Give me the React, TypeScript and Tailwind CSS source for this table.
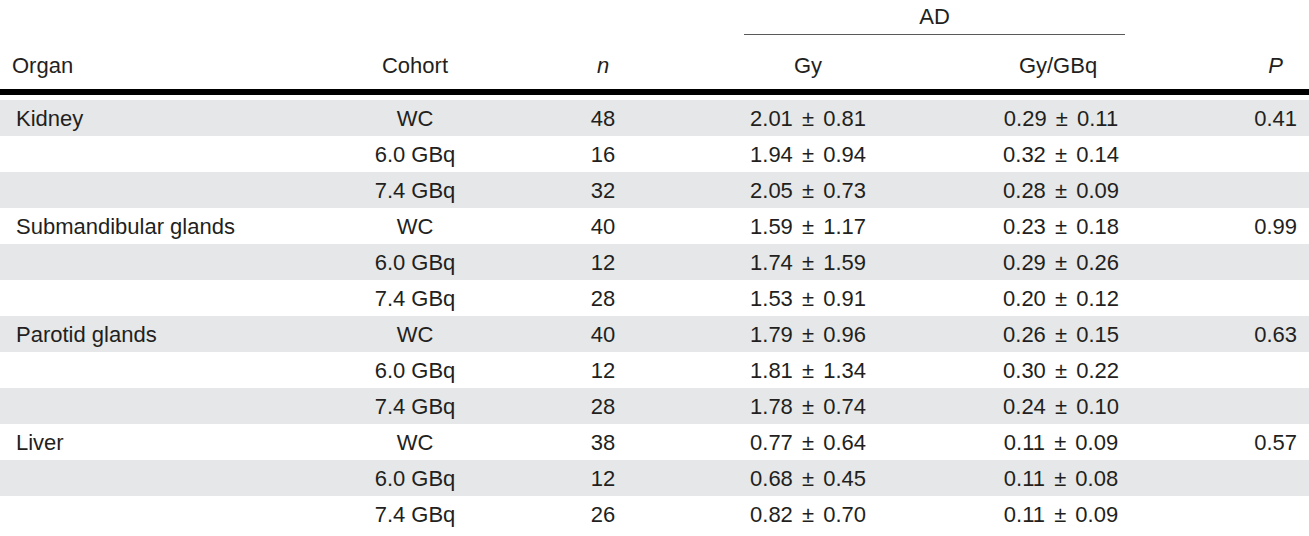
import React from "react";

type Row = { organ?: string; cohort: string; n: string; gy: string; gyg: string; p?: string };

const rows: Row[] = [
  { organ: "Kidney", cohort: "WC", n: "48", gy: "2.01 ± 0.81", gyg: "0.29 ± 0.11", p: "0.41" },
  { cohort: "6.0 GBq", n: "16", gy: "1.94 ± 0.94", gyg: "0.32 ± 0.14" },
  { cohort: "7.4 GBq", n: "32", gy: "2.05 ± 0.73", gyg: "0.28 ± 0.09" },
  { organ: "Submandibular glands", cohort: "WC", n: "40", gy: "1.59 ± 1.17", gyg: "0.23 ± 0.18", p: "0.99" },
  { cohort: "6.0 GBq", n: "12", gy: "1.74 ± 1.59", gyg: "0.29 ± 0.26" },
  { cohort: "7.4 GBq", n: "28", gy: "1.53 ± 0.91", gyg: "0.20 ± 0.12" },
  { organ: "Parotid glands", cohort: "WC", n: "40", gy: "1.79 ± 0.96", gyg: "0.26 ± 0.15", p: "0.63" },
  { cohort: "6.0 GBq", n: "12", gy: "1.81 ± 1.34", gyg: "0.30 ± 0.22" },
  { cohort: "7.4 GBq", n: "28", gy: "1.78 ± 0.74", gyg: "0.24 ± 0.10" },
  { organ: "Liver", cohort: "WC", n: "38", gy: "0.77 ± 0.64", gyg: "0.11 ± 0.09", p: "0.57" },
  { cohort: "6.0 GBq", n: "12", gy: "0.68 ± 0.45", gyg: "0.11 ± 0.08" },
  { cohort: "7.4 GBq", n: "26", gy: "0.82 ± 0.70", gyg: "0.11 ± 0.09" },
];

export default function App() {
  return (
    <div
      className="w-[1309px] h-[536px] bg-white text-[#231f20] text-[22px] overflow-hidden"
      style={{ fontFamily: '"Liberation Sans", Arial, Helvetica, sans-serif' }}
    >
      {/* AD spanning header */}
      <div className="flex pt-[4px]">
        <div className="w-[744px] shrink-0" />
        <div className="w-[381px] shrink-0 text-center leading-[26px] pb-[4px] border-b-[1.5px] border-[#58595b]">
          AD
        </div>
      </div>
      {/* Column header */}
      <div className="flex pt-[18px] pb-[10px] leading-[26px]">
        <div className="w-[330px] shrink-0 pl-3">Organ</div>
        <div className="w-[170px] shrink-0 text-center">Cohort</div>
        <div className="w-[206px] shrink-0 text-center italic">n</div>
        <div className="w-[38px] shrink-0" />
        <div className="w-[381px] shrink-0 flex justify-between">
          <div className="w-[128px] text-center">Gy</div>
          <div className="w-[128px] text-center pr-[6px]">Gy/GBq</div>
        </div>
        <div className="flex-1 text-right pr-[26px] italic">P</div>
      </div>
      <div className="h-[6px] bg-black" />
      <div className="h-[5px]" />
      {rows.map((r, i) => (
        <div
          key={i}
          className={`flex h-[36px] items-center leading-[26px] pt-[2px] ${i % 2 === 0 ? "bg-[#e6e7e8]" : "bg-white"}`}
        >
          <div className="w-[330px] shrink-0 pl-4">{r.organ ?? ""}</div>
          <div className="w-[170px] shrink-0 text-center">{r.cohort}</div>
          <div className="w-[206px] shrink-0 text-center">{r.n}</div>
          <div className="w-[38px] shrink-0" />
          <div className="w-[381px] shrink-0 flex justify-between">
            <div className="w-[128px] text-center whitespace-nowrap [word-spacing:3px]">{r.gy}</div>
            <div className="w-[128px] text-center whitespace-nowrap [word-spacing:3px]">{r.gyg}</div>
          </div>
          <div className="flex-1 text-right pr-3">{r.p ?? ""}</div>
        </div>
      ))}
    </div>
  );
}
